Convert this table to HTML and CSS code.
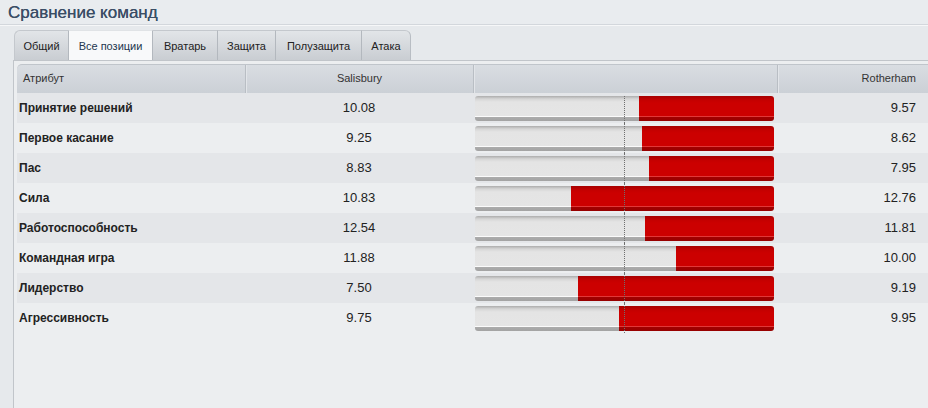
FILE: index.html
```html
<!DOCTYPE html>
<html lang="ru">
<head>
<meta charset="utf-8">
<title>Сравнение команд</title>
<link rel="stylesheet" href="styles.css">
</head>
<body>
<div class="title">Сравнение команд</div>
<div class="tabs">
  <div class="tab first" style="width:55px">Общий</div>
  <div class="tab active" style="width:84px">Все позиции</div>
  <div class="tab" style="width:65px">Вратарь</div>
  <div class="tab" style="width:58px">Защита</div>
  <div class="tab" style="width:86px">Полузащита</div>
  <div class="tab last" style="width:49px">Атака</div>
</div>
<div class="panel">
  <div class="table">
    <div class="row head">
      <div class="c-attr">Атрибут</div>
      <div class="c-home">Salisbury</div>
      <div class="c-bar"></div>
      <div class="c-away">Rotherham</div>
    </div>
    <div class="row odd first-row">
      <div class="c-attr">Принятие решений</div>
      <div class="c-home">10.08</div>
      <div class="c-bar"><div class="bar"><div class="grey" style="width:164px"></div><div class="red"></div></div></div>
      <div class="c-away">9.57</div>
    </div>
    <div class="row even">
      <div class="c-attr">Первое касание</div>
      <div class="c-home">9.25</div>
      <div class="c-bar"><div class="bar"><div class="grey" style="width:167px"></div><div class="red"></div></div></div>
      <div class="c-away">8.62</div>
    </div>
    <div class="row odd">
      <div class="c-attr">Пас</div>
      <div class="c-home">8.83</div>
      <div class="c-bar"><div class="bar"><div class="grey" style="width:174px"></div><div class="red"></div></div></div>
      <div class="c-away">7.95</div>
    </div>
    <div class="row even">
      <div class="c-attr">Сила</div>
      <div class="c-home">10.83</div>
      <div class="c-bar"><div class="bar"><div class="grey" style="width:96px"></div><div class="red"></div></div></div>
      <div class="c-away">12.76</div>
    </div>
    <div class="row odd">
      <div class="c-attr">Работоспособность</div>
      <div class="c-home">12.54</div>
      <div class="c-bar"><div class="bar"><div class="grey" style="width:170px"></div><div class="red"></div></div></div>
      <div class="c-away">11.81</div>
    </div>
    <div class="row even">
      <div class="c-attr">Командная игра</div>
      <div class="c-home">11.88</div>
      <div class="c-bar"><div class="bar"><div class="grey" style="width:201px"></div><div class="red"></div></div></div>
      <div class="c-away">10.00</div>
    </div>
    <div class="row odd">
      <div class="c-attr">Лидерство</div>
      <div class="c-home">7.50</div>
      <div class="c-bar"><div class="bar"><div class="grey" style="width:103px"></div><div class="red"></div></div></div>
      <div class="c-away">9.19</div>
    </div>
    <div class="row even">
      <div class="c-attr">Агрессивность</div>
      <div class="c-home">9.75</div>
      <div class="c-bar"><div class="bar"><div class="grey" style="width:144px"></div><div class="red"></div></div></div>
      <div class="c-away">9.95</div>
    </div>
  </div>
</div>
</body>
</html>
```

FILE: styles.css
```css
html, body {
  margin: 0;
  padding: 0;
  height: 100%;
}
body {
  background: #e6e9ec;
  font-family: "Liberation Sans", Arial, sans-serif;
  color: #222;
  overflow: hidden;
  display: flex;
  flex-direction: column;
}
.title {
  height: 25px;
  box-sizing: border-box;
  padding: 3px 0 0 8px;
  font-size: 17px;
  line-height: 20px;
  color: #3b4e66;
  text-shadow: 0 0 0.4px #3b4e66;
  border-bottom: 1px solid #d3d7dc;
  box-shadow: 0 1px 0 #f6f7f8;
  background: #e9ecef;
}
.tabs {
  display: flex;
  margin: 5px 0 0 14px;
  height: 30px;
}
.tab {
  box-sizing: border-box;
  height: 30px;
  font-size: 11px;
  line-height: 30px;
  text-align: center;
  color: #222;
  background: linear-gradient(#e2e5e8, #c9cdd2);
  border-right: 1px solid #b3b8be;
  border-top: 1px solid #c4c8cd;
}
.tab.first {
  border-top-left-radius: 6px;
  border-left: 1px solid #c4c8cd;
}
.tab.last {
  border-top-right-radius: 6px;
  border-right: 1px solid #b8bdc3;
}
.tab.active {
  background: #f8f9fa;
  color: #22364e;
  border-top-color: #e0e3e6;
}
.panel {
  flex: 1;
  margin-left: 13px;
  border-left: 1px solid #c1c5ca;
  border-top: 1px solid #c1c5ca;
  padding: 3px 0 0 3px;
  background: #eceef0;
}
.row {
  display: grid;
  grid-template-columns: 228px 228px 304px 1fr;
  height: 30px;
}
.row > div {
  position: relative;
}
.head {
  height: 29px;
  background: linear-gradient(#d9dde2, #cbd0d6);
  border-top: 1px solid #c0c5cb;
  border-top-left-radius: 5px;
  box-sizing: border-box;
  font-size: 11px;
  line-height: 27px;
  color: #333;
}
.head > div {
  border-left: 1px solid #b9bec4;
  box-shadow: inset 1px 0 0 #e2e5e9;
}
.head > .c-attr {
  border-left: 0;
  box-shadow: none;
  padding-left: 6px;
  font-weight: normal;
  font-size: 11px;
}
.head .c-away {
  padding-right: 12px;
}
.odd { background: #e4e6e9; }
.even { background: #eceef0; }
.row:not(.head) {
  line-height: 30px;
}
.c-attr {
  font-size: 12px;
  font-weight: bold;
  padding-left: 2px;
}
.row:not(.head) .c-home,
.row:not(.head) .c-away {
  font-size: 13px;
  color: #222;
}
.c-home {
  text-align: center;
}
.c-away {
  text-align: right;
  padding-right: 12px;
}
.bar {
  display: flex;
  margin: 3px 0 0 2px;
  width: 299px;
  height: 25px;
  border-radius: 3px;
  overflow: hidden;
}
.grey {
  background: linear-gradient(#adadad 0, #d6d6d6 3px, #e4e4e4 6px, #e5e5e5 20px, #fbfbfb 20px, #fbfbfb 21px, #acacac 21px, #a3a3a3 25px);
}
.red {
  flex: 1;
  background: linear-gradient(#a60000 0, #c40000 4px, #cc0000 7px, #cc0000 20px, #e03838 20px, #e03838 21px, #a20000 21px, #960000 25px);
}
.row:not(.head) .c-bar::after {
  content: "";
  position: absolute;
  left: 151px;
  top: 0;
  bottom: 0;
  border-left: 1px dotted #6f6f6f;
}
.first-row .c-bar::after {
  top: 3px !important;
}
```
